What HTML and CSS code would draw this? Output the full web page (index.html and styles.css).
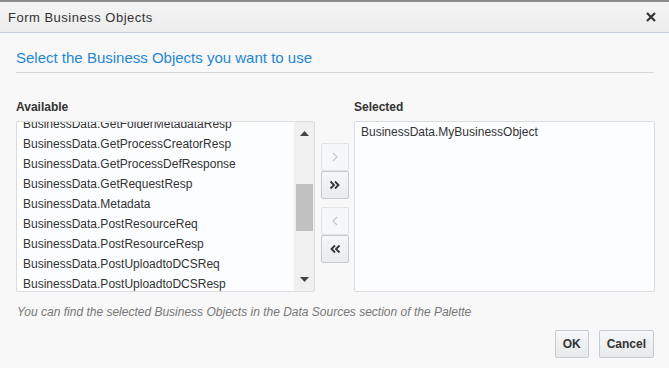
FILE: index.html
```html
<!DOCTYPE html>
<html lang="en">

<head>
  <meta charset="UTF-8">
  <title>Form Business Objects</title>
  <link rel="stylesheet" href="styles.css">
</head>

<body>
  <div class="dialog">
    <div class="dialog-header">
      <span class="dialog-title">Form Business Objects</span>
      <svg class="close-icon" width="10" height="10" viewBox="0 0 10 10">
        <path d="M1 1 L9 9 M9 1 L1 9" stroke="#333" stroke-width="2.2" fill="none" />
      </svg>
    </div>

    <div class="dialog-body">
      <h2 class="instructions">Select the Business Objects you want to use</h2>

      <div class="shuttle">
        <div class="shuttle-col">
          <label class="list-label">Available</label>
          <div class="list-box">
            <div class="list-viewport">
              <ul class="items">
                <li>BusinessData.GetFolderMetadataResp</li>
                <li>BusinessData.GetProcessCreatorResp</li>
                <li>BusinessData.GetProcessDefResponse</li>
                <li>BusinessData.GetRequestResp</li>
                <li>BusinessData.Metadata</li>
                <li>BusinessData.PostResourceReq</li>
                <li>BusinessData.PostResourceResp</li>
                <li>BusinessData.PostUploadtoDCSReq</li>
                <li>BusinessData.PostUploadtoDCSResp</li>
              </ul>
            </div>
            <div class="scrollbar">
              <svg width="9" height="5" viewBox="0 0 9 5"><path d="M0 5 L4.5 0 L9 5 Z" fill="#444" /></svg>
              <div class="track"><div class="thumb"></div></div>
              <svg width="9" height="5" viewBox="0 0 9 5"><path d="M0 0 L4.5 5 L9 0 Z" fill="#444" /></svg>
            </div>
          </div>
        </div>

        <div class="shuttle-buttons">
          <div class="btn-group">
            <button class="move-btn disabled">
              <svg width="8" height="12" viewBox="0 0 8 12"><path d="M2 2 L6 6 L2 10" stroke="#c8c8c8" stroke-width="1.2" fill="none" /></svg>
            </button>
            <button class="move-btn">
              <svg width="12" height="12" viewBox="0 0 12 12"><path d="M1.5 2.5 L5 6 L1.5 9.5 M6 2.5 L9.5 6 L6 9.5" stroke="#333" stroke-width="1.8" fill="none" /></svg>
            </button>
          </div>
          <div class="btn-group">
            <button class="move-btn disabled">
              <svg width="8" height="12" viewBox="0 0 8 12"><path d="M6 2 L2 6 L6 10" stroke="#c8c8c8" stroke-width="1.2" fill="none" /></svg>
            </button>
            <button class="move-btn">
              <svg width="12" height="12" viewBox="0 0 12 12"><path d="M10.5 2.5 L7 6 L10.5 9.5 M6 2.5 L2.5 6 L6 9.5" stroke="#333" stroke-width="1.8" fill="none" /></svg>
            </button>
          </div>
        </div>

        <div class="shuttle-col">
          <label class="list-label">Selected</label>
          <div class="list-box selected-box">
            <ul class="items">
              <li>BusinessData.MyBusinessObject</li>
            </ul>
          </div>
        </div>
      </div>

      <p class="hint">You can find the selected Business Objects in the Data Sources section of the Palette</p>

      <div class="dialog-footer">
        <button class="action-btn">OK</button>
        <button class="action-btn">Cancel</button>
      </div>
    </div>
  </div>
</body>

</html>
```

FILE: styles.css
```css
body {
  margin: 0;
  font-family: "Liberation Sans", Arial, sans-serif;
  background-color: #f8f8f8;
  color: #333;
}

.dialog {
  height: 368px;
  box-sizing: border-box;
  border-top: 2px solid #8c8c8c;
  background-color: #f8f8f8;
}

/* Header bar */
.dialog-header {
  height: 30px;
  display: flex;
  align-items: center;
  justify-content: space-between;
  padding: 0 13px 0 8px;
  background: linear-gradient(#f4f4f4, #ededed);
  border-bottom: 1px solid #c9d1da;
}

.dialog-title {
  font-size: 13px;
  letter-spacing: 0.5px;
  color: #333;
}

.close-icon {
  display: block;
}

.dialog-body {
  padding: 0 15px 0 16px;
}

.instructions {
  margin: 16px 0 0;
  padding-bottom: 5px;
  font-size: 15px;
  line-height: 18px;
  font-weight: normal;
  color: #1f87d6;
  border-bottom: 1px solid #d6d6d6;
}

/* Shuttle */
.shuttle {
  display: grid;
  grid-template-columns: 299px 28px 300px;
  column-gap: 6px;
  margin-top: 27px;
}

.shuttle-col:last-child {
  margin-left: -1px;
}

.list-label {
  display: block;
  font-size: 12px;
  line-height: 15px;
  font-weight: bold;
  color: #333;
  margin-bottom: 6px;
}

.list-box {
  height: 171px;
  box-sizing: border-box;
  border: 1px solid #dadcdf;
  border-radius: 2px;
  background-color: #fcfdff;
  display: flex;
  overflow: hidden;
}

.list-viewport {
  flex: 1;
  overflow: hidden;
}

.items {
  list-style: none;
  margin: 0;
  padding: 0 0 0 6px;
  font-size: 12px;
}

/* list is scrolled a little past its first item */
.list-viewport .items {
  margin-top: -8px;
}

.items li {
  height: 20px;
  line-height: 20px;
  white-space: nowrap;
}

.selected-box .items {
  padding-left: 6px;
}

.scrollbar {
  width: 20px;
  background-color: #f0f0f0;
  display: flex;
  flex-direction: column;
  align-items: center;
  padding: 9px 0 9px;
  box-sizing: border-box;
}

.track {
  flex: 1;
  width: 100%;
  padding: 0 1px 0 2px;
  box-sizing: border-box;
}

.thumb {
  height: 47px;
  margin-top: 48px;
  background-color: #c1c1c1;
}

.shuttle-buttons {
  padding-top: 43px;
  display: flex;
  flex-direction: column;
  gap: 8px;
}

.btn-group {
  display: flex;
  flex-direction: column;
}

.move-btn {
  width: 28px;
  height: 28px;
  padding: 0;
  display: flex;
  align-items: center;
  justify-content: center;
  background: linear-gradient(#f6f7f8, #e9ebed);
  border: 1px solid #c4cad0;
  border-radius: 2px;
}

.move-btn.disabled {
  background: #f6f7f8;
  border-color: #e1e3e6;
}

.hint {
  margin: 13px 0 0 1px;
  font-size: 12px;
  line-height: 15px;
  font-style: italic;
  color: #777;
}

.dialog-footer {
  display: flex;
  justify-content: flex-end;
  gap: 10px;
  margin-top: 10px;
}

.action-btn {
  height: 28px;
  padding: 0 7px;
  font-family: "Liberation Sans", Arial, sans-serif;
  font-size: 12px;
  font-weight: bold;
  color: #333;
  background: linear-gradient(#f6f7f8, #e7e9eb);
  border: 1px solid #c4cad0;
  border-radius: 2px;
}
```
